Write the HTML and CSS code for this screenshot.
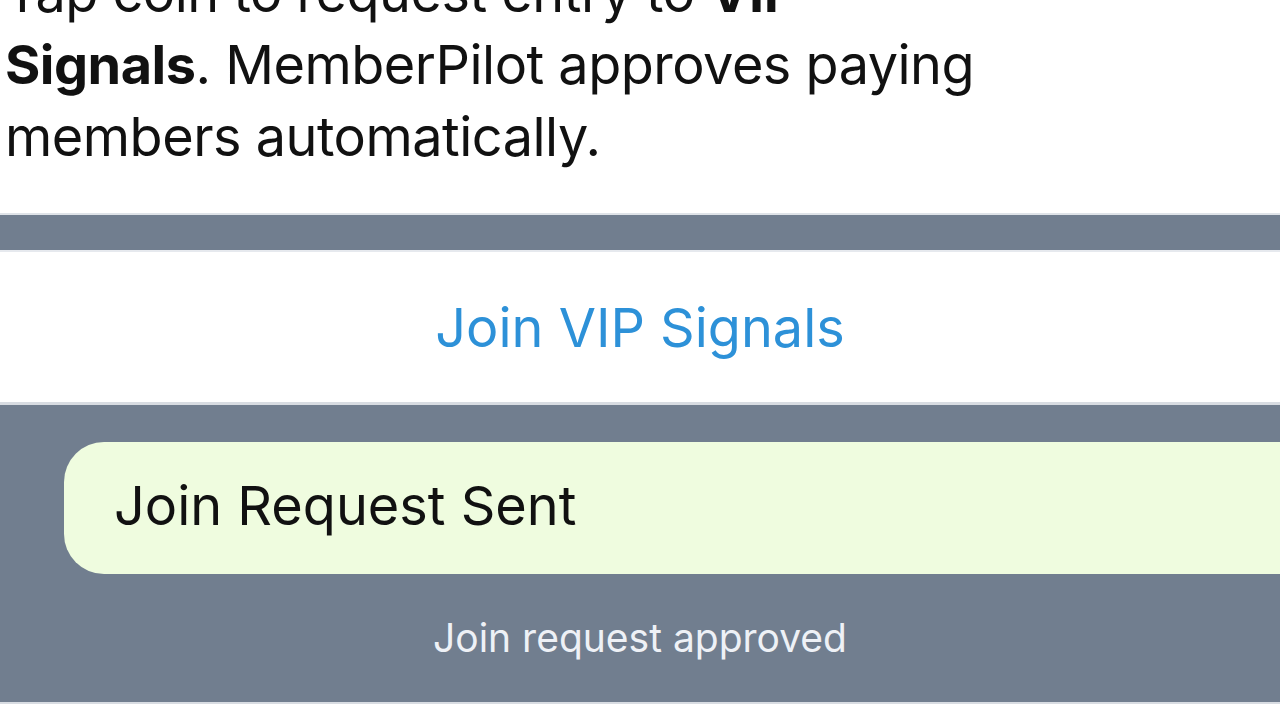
FILE: index.html
```html
<!doctype html>
<html lang="en">
<head>
    <meta charset="utf-8">
    <meta name="viewport" content="width=device-width, initial-scale=1">
    <title>VIP Signals</title>
    <link rel="stylesheet" href="styles.css">
</head>
<body>

<div class="message-card">
    <p class="message-text">Tap coin to request entry to <b>VIP Signals</b>. MemberPilot approves paying members automatically.</p>
</div>

<div class="inline-button">Join VIP Signals</div>

<div class="chat">
    <div class="bubble">Join Request Sent</div>
    <div class="service">Join request approved</div>
</div>

<div class="composer"></div>

</body>
</html>
```

FILE: styles.css
```css
body {
    margin: 0;
    height: 720px;
    overflow: hidden;
    background-color: #717e8f;
    font-family: 'Inter', 'Noto Sans', sans-serif;
    color: #111;
}

.message-card {
    background-color: #fff;
    padding: 0 0 40px 5px;
    box-shadow: 0 2px 0 #dfe3e8;
}

.message-text {
    margin: -43px 0 0;
    max-width: 975px;
    font-size: 54px;
    letter-spacing: -0.5px;
    line-height: 72px;
}

.message-text b {
    font-weight: 700;
}

.inline-button {
    display: flex;
    align-items: center;
    justify-content: center;
    height: 150px;
    margin-top: 37px;
    background-color: #fff;
    border-top: 2px solid #e6e9ee;
    border-bottom: 3px solid #d8dce2;
    color: #2d91d8;
    font-size: 54px;
}

.chat {
    padding: 37px 0 0 64px;
}

.bubble {
    display: flex;
    align-items: center;
    height: 126px;
    padding: 0 0 6px 50px;
    border-radius: 40px 0 0 40px;
    background-color: #effcdf;
    font-size: 54px;
}

.service {
    padding: 39px 0 39px;
    margin-left: -64px;
    text-align: center;
    color: #eef1f6;
    font-size: 39px;
    line-height: 50px;
}

.composer {
    height: 40px;
    background-color: #fff;
    border-top: 2px solid #d8dce2;
}
```
